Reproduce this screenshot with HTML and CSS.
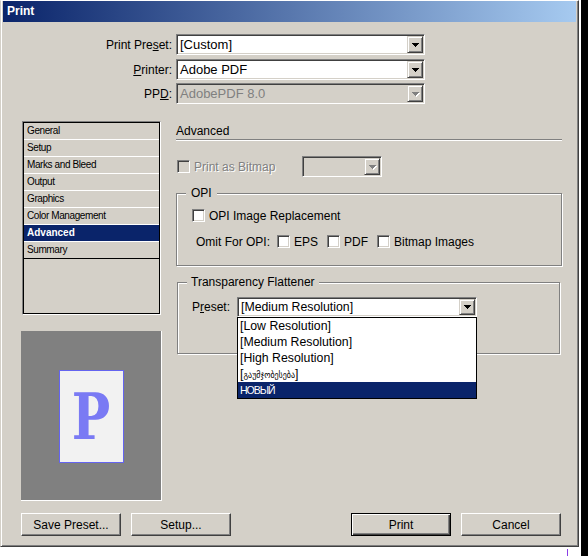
FILE: index.html
```html
<!DOCTYPE html>
<html>
<head>
<meta charset="utf-8">
<title>Print</title>
<link rel="stylesheet" href="styles.css">
</head>
<body>
<div class="screen">
  <div class="shot">
    <div class="window">
      <div class="titlebar">Print</div>
      <div class="content">
        <div class="topform">
          <div class="frow">
            <span class="flabel">Print Pre<u>s</u>et:</span>
            <div class="combo wide"><span class="cval">[Custom]</span><span class="cbtn"><svg class="arr" width="7" height="4" viewBox="0 0 7 4"><path d="M0 0h7v1H0zM1 1h5v1H1zM2 2h3v1H2zM3 3h1v1H3z"/></svg></span></div>
          </div>
          <div class="frow">
            <span class="flabel"><u>P</u>rinter:</span>
            <div class="combo wide"><span class="cval">Adobe PDF</span><span class="cbtn"><svg class="arr" width="7" height="4" viewBox="0 0 7 4"><path d="M0 0h7v1H0zM1 1h5v1H1zM2 2h3v1H2zM3 3h1v1H3z"/></svg></span></div>
          </div>
          <div class="frow r3">
            <span class="flabel">PP<u>D</u>:</span>
            <div class="combo wide disabled"><span class="cval">AdobePDF 8.0</span><span class="cbtn"><svg class="arr" width="7" height="4" viewBox="0 0 7 4"><path d="M0 0h7v1H0zM1 1h5v1H1zM2 2h3v1H2zM3 3h1v1H3z"/></svg></span></div>
          </div>
        </div>
        <div class="middle">
          <div class="sidecol">
            <ul class="navlist">
              <li>General</li>
              <li>Setup</li>
              <li>Marks and Bleed</li>
              <li>Output</li>
              <li>Graphics</li>
              <li>Color Management</li>
              <li class="sel">Advanced</li>
              <li class="last">Summary</li>
            </ul>
            <div class="preview"><div class="page"><span class="pchar">P</span></div></div>
          </div>
          <div class="panel">
            <div class="heading">Advanced</div>
            <div class="bmrow">
              <span class="check dis"></span>
              <span class="bmlabel">Print as Bitmap</span>
              <div class="combo small disabled"><span class="cval"></span><span class="cbtn"><svg class="arr" width="7" height="4" viewBox="0 0 7 4"><path d="M0 0h7v1H0zM1 1h5v1H1zM2 2h3v1H2zM3 3h1v1H3z"/></svg></span></div>
            </div>
            <div class="group opi">
              <span class="legend">OPI</span>
              <div class="crow"><span class="check"></span><span>OPI Image Replacement</span></div>
              <div class="crow omit">
                <span class="omitlabel">Omit For OPI:</span>
                <span class="citem"><span class="check"></span>EPS</span>
                <span class="citem"><span class="check"></span>PDF</span>
                <span class="citem"><span class="check"></span>Bitmap Images</span>
              </div>
            </div>
            <div class="group tf">
              <span class="legend">Transparency Flattener</span>
              <div class="prow">
                <span class="plabel">P<u>r</u>eset:</span>
                <div class="combo flat">
                  <span class="cval">[Medium Resolution]</span><span class="cbtn"><svg class="arr" width="7" height="4" viewBox="0 0 7 4"><path d="M0 0h7v1H0zM1 1h5v1H1zM2 2h3v1H2zM3 3h1v1H3z"/></svg></span>
                  <ul class="droplist">
                    <li>[Low Resolution]</li>
                    <li>[Medium Resolution]</li>
                    <li>[High Resolution]</li>
                    <li>[<span class="geo">გაუმჯობესება</span>]</li>
                    <li class="hl">НОВЫЙ</li>
                  </ul>
                </div>
              </div>
            </div>
          </div>
        </div>
        <div class="buttons">
          <div class="btn">Save Preset...</div>
          <div class="btn">Setup...</div>
          <span class="spacer"></span>
          <div class="btn default">Print</div>
          <div class="btn">Cancel</div>
        </div>
      </div>
    </div>
    <div class="tick"></div>
  </div>
  <div class="gapcol"></div>
  <div class="strip"></div>
</div>
</body>
</html>
```

FILE: styles.css
```css
* { box-sizing: border-box; margin: 0; padding: 0; }
html, body { background: #fff; }
html { overflow: hidden; }
body {
  font-family: "Liberation Sans", Arial, sans-serif;
  font-size: 12px; color: #000;
}
.screen {
  display: flex; width: 588px; height: 556px;
}
.shot { width: 579px; flex: none; }
.gapcol { flex: none; width: 2px; height: 556px; background: #fff; }
.strip { flex: none; width: 7px; height: 556px; background: #000; }
.tick { margin: 2px 0 0 567px; width: 1px; height: 7px; background: #8a3fe6; }

.window {
  width: 579px; height: 547px;
  background: #d4d0c8;
  border-style: solid; border-width: 1px;
  border-color: #fff #404040 #404040 #d4d0c8;
  box-shadow: inset 1px 0 0 #fff, inset -1px -1px 0 #808080;
  padding: 0 2px 2px 2px;
  display: flex; flex-direction: column;
}
.titlebar {
  flex: none; height: 21px;
  background: linear-gradient(to right, #0a246a, #a6caf0);
  color: #fff; font-weight: bold; font-size: 12px; line-height: 21px;
  padding-left: 4px;
}
.content {
  flex: 1;
  padding: 12px 15px 8px 18px;
  display: flex; flex-direction: column;
}

/* top form */
.topform { flex: none; }
.frow { display: flex; align-items: center; height: 21px; }
.frow + .frow { margin-top: 4px; }
.frow.r3 { margin-top: 3px; }
.flabel { width: 151px; margin-right: 4px; text-align: right; font-size: 12px; white-space: nowrap; }

/* combo boxes */
.combo {
  position: relative; flex: none;
  display: flex; height: 21px; padding: 1px;
  background: #fff;
  border: 1px solid; border-color: #808080 #fff #fff #808080;
  box-shadow: inset 1px 1px 0 #404040, inset -1px -1px 0 #d4d0c8;
}
.combo.wide { width: 249px; }
.combo.small { width: 80px; }
.cval { flex: 1; padding-left: 2px; font-size: 13px; line-height: 17px; white-space: nowrap; overflow: hidden; }
.cbtn {
  flex: none; width: 16px; height: 17px;
  background: #d4d0c8;
  border: 1px solid; border-color: #d4d0c8 #404040 #404040 #d4d0c8;
  box-shadow: inset 1px 1px 0 #fff, inset -1px -1px 0 #808080;
  display: flex; align-items: center; justify-content: center;
}
.arr { display: block; fill: #000; shape-rendering: crispEdges; }
.combo.disabled { background: #d4d0c8; }
.combo.disabled .cval { color: #808080; }
.combo.disabled .arr { fill: #808080; filter: drop-shadow(1px 1px 0 #fff); }
.combo.flat { width: 240px; height: 20px; }
.combo.flat .cbtn { height: 16px; }
.combo.flat .cval { font-size: 12.3px; line-height: 16px; padding-left: 2px; }

/* middle */
.middle {
  flex: none; margin-top: 17px; height: 380px;
  display: grid; grid-template-columns: 141px 386px; column-gap: 14px;
}
.sidecol { display: flex; flex-direction: column; }
.navlist {
  list-style: none; margin-left: 1px; width: 139px; height: 194px; padding: 1px;
  border: 1px solid; border-color: #808080 #fff #fff #808080;
  box-shadow: inset 0 0 0 1px #000;
}
.navlist li {
  height: 17px; border-bottom: 1px solid #fff;
  font-size: 10px; line-height: 16px; padding-left: 3px;
  letter-spacing: -0.4px; white-space: nowrap;
}
.navlist li.sel { background: #0a246a; color: #fff; font-weight: bold; letter-spacing: 0; }
.navlist li.last { border-bottom-color: #000; }

.preview {
  margin-top: 16px; width: 141px; height: 170px;
  background: #808080;
  border-right: 1px solid #fff; border-bottom: 1px solid #fff;
  padding: 39px 0 0 38px;
}
.page {
  width: 65px; height: 93px;
  background: #f2f2f2; border: 1px solid #6464f0;
  display: flex; align-items: center; justify-content: center;
}
.pchar {
  display: inline-block;
  font-family: "DejaVu Serif", serif;
  font-weight: bold;
  font-size: 64px; line-height: 1; color: #7a7af4;
  transform: scaleX(0.8);
}

/* right panel */
.panel { display: flex; flex-direction: column; }
.heading {
  flex: none; height: 19px; padding-top: 3px;
  font-size: 12px; line-height: 14px;
  border-bottom: 1px solid #808080; box-shadow: 0 1px 0 #fff;
}
.bmrow { flex: none; margin-top: 16px; height: 21px; display: flex; align-items: center; }
.bmrow .check { margin-left: 1px; }
.bmlabel { width: 108px; margin-left: 4px; color: #808080; text-shadow: 1px 1px 0 #fff; white-space: nowrap; }

.check {
  flex: none; display: block; width: 13px; height: 13px;
  background: #fff;
  border: 1px solid; border-color: #808080 #fff #fff #808080;
  box-shadow: inset 1px 1px 0 #404040, inset -1px -1px 0 #d4d0c8;
}
.check.dis { background: #d4d0c8; }

.group {
  position: relative; flex: none;
  border: 1px solid #808080;
  box-shadow: inset 1px 1px 0 #fff, 1px 1px 0 #fff;
}
.legend {
  position: absolute; top: -8px; left: 9px;
  padding: 0 5px; background: #d4d0c8;
  font-size: 12px; line-height: 14px; white-space: nowrap;
}
.group.opi { margin-top: 16px; height: 73px; padding: 15px 0 0 15px; }
.crow { display: flex; align-items: center; height: 13px; white-space: nowrap; }
.crow .check { margin-right: 4px; }
.crow.omit { margin-top: 13px; padding-left: 4px; }
.omitlabel { width: 81px; }
.citem { display: flex; align-items: center; width: 50px; }

.group.tf { margin: 16px 2px 0 1px; height: 72px; padding: 14px 0 0 14px; }
.group.tf .legend { padding: 0 4px; }
.prow { display: flex; align-items: center; height: 20px; }
.plabel { width: 45px; white-space: nowrap; }

.droplist {
  position: absolute; left: -1px; top: 19px; z-index: 5;
  width: 240px; height: 82px;
  list-style: none; background: #fff; border: 1px solid #000;
}
.droplist li { height: 16px; line-height: 16px; padding-left: 2px; font-size: 12.3px; white-space: nowrap; }
.droplist li.hl { background: #0a246a; color: #fff; font-size: 10.5px; letter-spacing: -1px; }
.geo { font-family: "DejaVu Sans", sans-serif; font-size: 8px; }

/* buttons */
.buttons { flex: none; margin-top: 12px; height: 23px; display: flex; }
.spacer { flex: 1; }
.btn {
  flex: none; width: 100px; height: 23px;
  display: flex; align-items: center; justify-content: center;
  font-size: 12px; background: #d4d0c8;
  border: 1px solid; border-color: #fff #404040 #404040 #fff;
  box-shadow: inset -1px -1px 0 #808080;
}
.btn + .btn { margin-left: 10px; }
.btn.default {
  border: 1px solid #000;
  box-shadow: inset 1px 1px 0 #fff, inset -1px -1px 0 #404040, inset -2px -2px 0 #808080;
}
```
